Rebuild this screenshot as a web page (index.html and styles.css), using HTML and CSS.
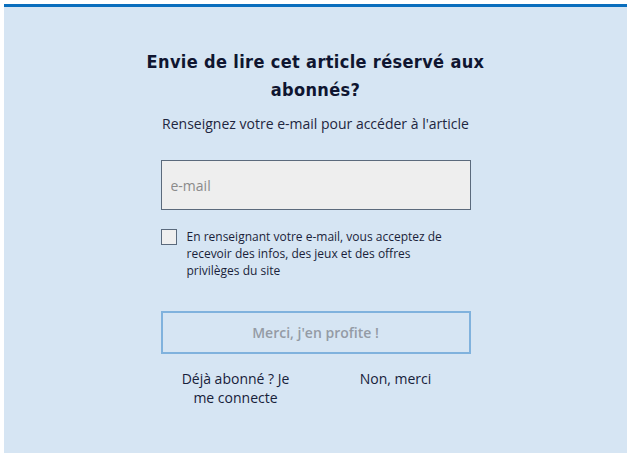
FILE: index.html
```html
<!DOCTYPE html>
<html lang="fr">
<head>
<meta charset="utf-8">
<link rel="stylesheet" href="styles.css">
</head>
<body>
<div class="card">
  <div class="content">
    <h1 class="title">Envie de lire cet article réservé aux abonnés?</h1>
    <p class="subtitle">Renseignez votre e-mail pour accéder à l'article</p>
    <input class="email" type="text" placeholder="e-mail">
    <label class="consent">
      <span class="box"></span>
      <span class="consent-text">En renseignant votre e-mail, vous acceptez de recevoir des infos, des jeux et des offres privilèges du site</span>
    </label>
    <button class="submit" type="button">Merci, j'en profite !</button>
    <div class="links">
      <a class="link">Déjà abonné ? Je me connecte</a>
      <a class="link">Non, merci</a>
    </div>
  </div>
</div>
</body>
</html>
```
FILE: styles.css
```css
html, body {
  margin: 0;
  padding: 0;
  background: #ffffff;
}
body {
  padding: 4px 7px 5px 4px;
  font-family: "Open Sans", "Liberation Sans", sans-serif;
  color: #16213a;
}
.card {
  box-sizing: border-box;
  width: 623px;
  height: 449px;
  background: #d6e5f3;
  border-top: 3px solid #0a6ebd;
  display: flex;
  justify-content: center;
}
.content {
  width: 310px;
  display: flex;
  flex-direction: column;
  align-items: stretch;
  padding-top: 41px;
}
.title {
  margin: 0 -30px;
  font-family: "DejaVu Sans", sans-serif;
  font-stretch: condensed;
  font-weight: bold;
  font-size: 18px;
  letter-spacing: 0.35px;
  line-height: 28px;
  text-align: center;
  color: #0f1530;
}
.subtitle {
  margin: 10px 0 0;
  font-size: 14px;
  line-height: 20px;
  text-align: center;
  color: #1e2640;
}
.email {
  box-sizing: border-box;
  margin-top: 26px;
  height: 50px;
  width: 310px;
  background: #eeeeee;
  border: 1px solid #5b6a7c;
  border-radius: 0;
  padding: 0 9px;
  font-family: "Open Sans", sans-serif;
  font-size: 14px;
  color: #333;
  outline: none;
}
.email::placeholder {
  color: #8a8a8a;
}
.consent {
  display: flex;
  gap: 10px;
  margin-top: 19px;
}
.box {
  box-sizing: border-box;
  flex: none;
  width: 16px;
  height: 16px;
  background: #efefef;
  border: 1px solid #5b6a7c;
}
.consent-text {
  width: 262px;
  font-size: 12px;
  line-height: 17px;
  margin-top: -1px;
  color: #1a1f3a;
}
.submit {
  box-sizing: border-box;
  margin-top: 32px;
  height: 43px;
  width: 310px;
  background: transparent;
  border: 2px solid #80b2dd;
  font-family: "Open Sans", sans-serif;
  font-weight: 600;
  font-size: 14px;
  color: #949ba5;
  padding: 0;
}
.links {
  display: grid;
  grid-template-columns: 1fr 1fr;
  column-gap: 10px;
  margin-top: 15px;
}
.link {
  padding: 0 13px;
  font-size: 14px;
  line-height: 19px;
  text-align: center;
  color: #16213a;
}
```
